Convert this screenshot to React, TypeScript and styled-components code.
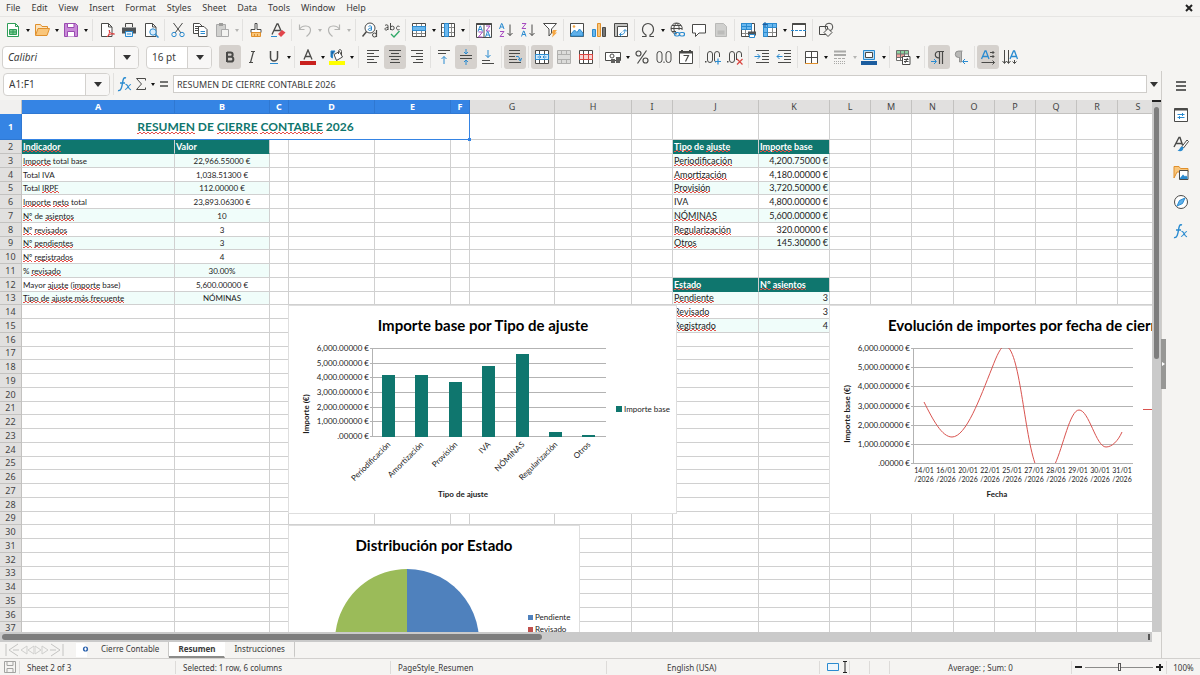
import React from "react";
import styled, { createGlobalStyle, css } from "styled-components";

const UI_FONT = `"Noto Sans", "Open Sans", sans-serif`;
const CELL_FONT = `Lato, "Noto Sans", sans-serif`;
const INK = "#4a4a48";
const BLUE = "#2a8bd0";
const GREEN = "#0f766e";

const GlobalStyle = createGlobalStyle`
  * { box-sizing: border-box; }
  body {
    margin: 0;
    background: #f5f4f2;
    color: #3a3a3a;
    font-family: ${UI_FONT};
    font-size: 10px;
  }
  button, input, select { font: inherit; color: inherit; margin: 0; }
  button { border: 0; padding: 0; background: none; }
`;

/* ---------- icons ---------- */

const s = (color = INK, width = 1) => ({ stroke: color, strokeWidth: width, fill: "none" });
const lines = (rows: [number, number, number][], color = INK) => (
  <path d={rows.map(([y, a, b]) => `M${a} ${y}.5H${b}`).join("")} {...s(color)} />
);
const frame = "M1.5 1.5h13v13h-13z";
const pilcrow = "M13 2.5H7.5a3.2 3.2 0 0 0 0 6.4H8.5V15M8.5 2.5V9M11.5 2.5V15";
const glyphA = (x: number, y: number) => (
  <path d={`M${x} ${y + 5.5}l2-5.5h.5l2 5.5M${x + 0.8} ${y + 3.5}h3`} {...s(BLUE)} />
);
const glyphZ = (x: number, y: number) => (
  <path d={`M${x} ${y + 0.5}h4l-4 5h4`} {...s("#a64bc0")} />
);

const icons: Record<string, React.ReactNode> = {
  newDoc: (
    <>
      <path d="M2.5 1.5h8l3 3v10h-11zM10.5 1.5v3h3" stroke="#2f9e58" fill="#fff" />
      <path d="M4.5 7.5h7v5h-7zM4.5 10h7M8 7.5v5" stroke="#2f9e58" fill="#7ccb93" />
    </>
  ),
  open: (
    <>
      <path d="M1.5 13V2.5h5l1.5 2h5.5V7" stroke="#e0902c" fill="#fbe3bd" />
      <path d="M1.5 13.5 4 6.5h11.5l-2.5 7z" stroke="#e0902c" fill="#f9c67b" />
    </>
  ),
  save: (
    <>
      <path d="M1.5 1.5h11l2 2v11h-13z" stroke="#9a4bb0" fill="#c98ad8" />
      <path d="M4.5 1.5h6.5v4h-6.5zM4.5 14.5v-5h7v5" stroke="#9a4bb0" fill="#fff" />
    </>
  ),
  pdf: (
    <>
      <path d="M2.5 1.5h7l3.5 3.5v9.5h-10.5zM9.5 1.5v3.5h3.5" stroke={INK} fill="#fff" />
      <path d="M8 15c2-2 3-5 2.5-7-1.5 1 2 5 5 4-2-1-5 0-7.5 3" {...s("#dc3b3b")} />
    </>
  ),
  print: (
    <>
      <path d="M4.5 5V1.5h7V5" {...s()} />
      <path d="M1 5.5h14v6H1z" fill="#4f5355" />
      <path d="M4.5 9.5h7v5h-7z" stroke={BLUE} fill="#e9f4fc" />
      <path d="M6 12h4" {...s(BLUE)} />
    </>
  ),
  preview: (
    <>
      <path d="M2.5 1.5h7l3.5 3.5v9.5h-10.5zM9.5 1.5v3.5h3.5" stroke={INK} fill="#fff" />
      <circle cx="10" cy="10" r="3.2" stroke={BLUE} fill="#d9edfb" />
      <path d="m12.5 12.5 3 3" {...s(BLUE, 1.5)} />
    </>
  ),
  cut: (
    <>
      <path d="M3.5 1 11 11M12.5 1 5 11" {...s()} />
      <circle cx="4" cy="12.5" r="2.2" {...s(BLUE)} />
      <circle cx="12" cy="12.5" r="2.2" {...s(BLUE)} />
    </>
  ),
  copy: (
    <>
      <path d="M1.5 1.5h6l2.5 2.5v7.5h-8.5zM3 4.5h4M3 6.5h4M3 8.5h4" stroke={INK} fill="#fff" />
      <path d="M6.5 4.5h5.5l3 3v7h-8.5z" stroke={INK} fill="#fff" />
      <path d="M8.5 9.5h4.5M8.5 11.5h4.5" {...s(BLUE)} />
    </>
  ),
  paste: (
    <>
      <path d="M2.5 2.5h9v12h-9z" stroke="#aaa" fill="#d0d0ce" />
      <path d="M5 1h4v3H5z" fill="#9d9d9b" />
      <path d="M7.5 7.5h7v7h-7z" stroke="#aaa" fill="#f3f3f1" />
    </>
  ),
  brush: (
    <>
      <path d="M7 1.5h2v6h4v3H3v-3h4z" stroke={INK} fill="#fff" />
      <path d="M3.5 10.5h9v4h-9zM6.5 12v2.5M9.5 12v2.5" stroke="#e0902c" fill="#f9c67b" />
    </>
  ),
  clear: (
    <>
      <path d="M2 12.5 7 2h1l4 9M4 8.5h6" {...s(INK, 1.3)} />
      <path d="M1 14.5h6" {...s(BLUE)} />
      <path d="m8 12 4-4 3.5 2.5-4.5 4.5z" fill="#e2454b" />
    </>
  ),
  undo: <path d="M2.5 2.5v5h5M2.5 7.5C5 2.5 13.5 3 13.5 8c0 3-2 5-4 6.5" {...s("#b4b4b2", 1.2)} />,
  redo: <path d="M13.5 2.5v5h-5M13.5 7.5C11 2.5 2.5 3 2.5 8c0 3 2 5 4 6.5" {...s("#b4b4b2", 1.2)} />,
  find: (
    <>
      <circle cx="8" cy="6" r="5" stroke={INK} fill="#fff" />
      <path d="M4.5 9.5.5 14.5" {...s(INK, 1.5)} />
      <path d="M6.5 4.5c1-1 3-1 3 .5v3.5M9.5 6c-4 0-4 2.5-1.5 2.5l1.5-1" {...s(BLUE)} />
      <path d="M14.5 8v7" {...s(INK, 1.2)} />
      <circle cx="12.5" cy="13" r="2" stroke={INK} fill="#f5f4f2" />
    </>
  ),
  spell: (
    <>
      <path d="M1 3.5c1-1 3-1 3 .5v4M4 5.5c-4 0-4 3-1 2.5l1-1M6.5 1v7" {...s()} />
      <circle cx="8.3" cy="6" r="1.9" {...s()} />
      <path d="M15.5 4.5c-4-2-4 5 0 3" {...s()} />
      <path d="m7 12 3 3 5.5-6" {...s("#2fa866", 1.3)} />
    </>
  ),
  row: (
    <>
      <path d={frame} stroke={INK} fill="#fff" />
      <path d="M5.5 2v12M10.5 2v12M2 11.5h12" {...s("#8a8a88")} />
      <path d="M1.5 4.5h13v4h-13z" stroke={BLUE} fill="#6bb8ee" />
    </>
  ),
  column: (
    <>
      <path d={frame} stroke={INK} fill="#fff" />
      <path d="M2 5.5h12M2 10.5h12M11.5 2v12" {...s("#8a8a88")} />
      <path d="M4.5 1.5h4v13h-4z" stroke={BLUE} fill="#6bb8ee" />
    </>
  ),
  sort: (
    <>
      <path d="M.5 1.5h15v14H.5zM8 1.5v14" stroke={INK} fill="#fff" />
      <path d="M.5 2h15" {...s(INK, 2)} />
      {glyphA(2, 4)}
      {glyphZ(2.5, 9.5)}
      {glyphZ(10, 3.5)}
      {glyphA(9.5, 9.5)}
    </>
  ),
  asc: (
    <>
      {glyphA(1.5, 1.5)}
      {glyphZ(2, 9)}
      <path d="M12 2.5v11M9.5 11l2.5 2.5 2.5-2.5" {...s()} />
    </>
  ),
  desc: (
    <>
      {glyphZ(2, 1)}
      {glyphA(1.5, 9)}
      <path d="M12 2.5v11M9.5 11l2.5 2.5 2.5-2.5" {...s()} />
    </>
  ),
  filter: (
    <>
      <path d="M1.5 1.5h13L9.5 7v4L7 14V7z" stroke={INK} fill="#fff" />
      <path d="M11 8h4l-2 2.5h2l-5 5 1-4H9.5z" fill="#f5a742" />
    </>
  ),
  image: (
    <>
      <path d={frame} stroke={INK} fill="#fff" />
      <path d="M2 12l3.5-4 2.5 2.5L10.5 7 14 11v3H2z" fill="#5fb0ea" stroke={BLUE} />
      <circle cx="5" cy="4.5" r="1.3" fill="#f5a742" />
    </>
  ),
  chart: (
    <>
      <path d="M1.5 7.5h3v7h-3z" stroke={BLUE} fill="#6bb8ee" />
      <path d="M6.5 1.5h3v13h-3z" stroke="#e0902c" fill="#f9c67b" />
      <path d="M11.5 5.5h3v9h-3z" stroke={INK} fill="#777" />
    </>
  ),
  pivot: (
    <>
      <path d={frame} stroke={INK} fill="#fff" />
      <path d="M2 2h12v2H2zM2 4h2v10H2z" fill="#c4c4c2" />
      <path d="M4.5 14.5v-10h10" {...s()} />
      <path d="M7 12.5c3 .5 5-1 5-4.5M10 9.5l2-2 2 2M8.5 10.5l-2 2 2 2" {...s(BLUE)} />
    </>
  ),
  omega: <path d="M2 14.5h4v-1.5C3.5 11.5 2.5 9.5 2.5 7.5c0-3.5 2.5-6 5.5-6s5.5 2.5 5.5 6c0 2-1 4-3.5 5.5v1.5h4" {...s(INK, 1.2)} />,
  link: (
    <>
      <path d="M7.5 1a5.5 5.5 0 1 0 0 11M7.5 1a5.5 5.5 0 0 1 5.5 7M2 6.5h11M3 3.5h9M3 9.5h4M7.5 1C4 4 4 9 7.5 12M7.5 1c2.5 2 3 5 2.5 7" {...s()} />
      <rect x="5.5" y="10.5" width="5" height="3.5" rx="1.7" {...s(BLUE, 1.2)} />
      <rect x="10.5" y="10.5" width="5" height="3.5" rx="1.7" {...s(BLUE, 1.2)} />
    </>
  ),
  comment: <path d="M1.5 2.5h13v8.5H8L4.5 14.5V11h-3z" stroke={INK} fill="#fff" />,
  headerFooter: (
    <>
      <path d="M2.5 1.5h8l3 3v10h-11z" stroke="#b9b9b7" fill="#d0d0ce" />
      <path d="M4.5 8.5h7v4h-7z" fill="#bcbcba" />
    </>
  ),
  printArea: (
    <>
      <path d={frame} stroke={INK} fill="#fff" />
      <path d="M2 11.5h12M11.5 2v12M5.5 8v6" {...s("#8a8a88")} />
      <path d="M1.5 1.5h10v6h-10zM1.5 4.5h10M6.5 1.5v6" stroke={BLUE} fill="#6bb8ee" />
      <path d="M8 9.5h8v4H8z" fill="#4f5355" />
      <path d="M9.5 12.5h5v3h-5z" stroke={BLUE} fill="#fff" />
    </>
  ),
  freeze: (
    <>
      <path d={frame} stroke={INK} fill="#fff" />
      <path d="M5 10.5h9M10.5 5v9" {...s("#8a8a88")} />
      <path d="M1.5 1.5h13v4h-9v9h-4zM10.5 1.5v4M1.5 10.5h4M5.5 5.5h-4M5.5 5.5v-4" stroke={BLUE} fill="#6bb8ee" />
      <path d="M3 0v5M.5 2.5h5" {...s("#1c5d9f")} />
    </>
  ),
  split: (
    <>
      <path d={frame} stroke={INK} fill="#fff" />
      <path d="M1.5 2h13" {...s(INK, 2)} />
      <path d="M0 8.5h16" stroke={BLUE} strokeDasharray="3 1" />
    </>
  ),
  shapes: (
    <>
      <path d="M1.5 4.5h8v8h-8z" {...s()} />
      <circle cx="11" cy="5" r="3.8" {...s()} />
      <path d="m10 6.5 4 4-4 4-4-4z" stroke={INK} fill="#f5f4f2" />
    </>
  ),
  bold: <path d="M5 3v10M5 3.5h3.5a2 2 0 0 1 0 4.3H5M5 7.8h4a2.3 2.3 0 0 1 0 4.7H5" {...s(INK, 2)} />,
  italic: <path d="M7 2.5h4M5 13.5h4M9.5 2.5l-3 11" {...s(INK, 1.2)} />,
  underline: (
    <>
      <path d="M4.5 2v6.5a3.5 3.5 0 0 0 7 0V2" {...s(INK, 1.5)} />
      <path d="M4 14.5h8" {...s(BLUE)} />
    </>
  ),
  fontColor: (
    <>
      <path d="m4 10.5 4-9.5 4 9.5M5.5 7.5h5" {...s(INK, 1.3)} />
      <path d="M0 12h16v4H0z" fill="#c9211e" />
    </>
  ),
  fillColor: (
    <>
      <path d="M0 12h16v4H0z" fill="#ffff00" />
      <path d="m5 5.5 5.5-3 3 5.5-6 3.5z" stroke={INK} fill="#fff" />
      <path d="M9.5 5V2.5c0-2.5 3-2.5 3 0V6" {...s()} />
      <path d="M2 2h4L3.5 5.5V9L2 8z" fill="#1c5d9f" stroke={BLUE} />
    </>
  ),
  alignLeft: lines([[1, 2, 14], [4, 2, 9], [7, 2, 14], [10, 2, 9], [13, 2, 12]]),
  alignCenter: lines([[1, 2, 14], [4, 4, 12], [7, 2, 14], [10, 4, 12], [13, 3, 13]]),
  alignRight: lines([[1, 2, 14], [4, 7, 14], [7, 2, 14], [10, 7, 14], [13, 4, 14]]),
  alignTop: (
    <>
      {lines([[1, 2, 14], [4, 2, 10]])}
      <path d="M8 15V7.5M5.5 10 8 7.5l2.5 2.5" {...s(BLUE)} />
    </>
  ),
  alignMiddle: (
    <>
      {lines([[6, 2, 14], [9, 2, 14]])}
      <path d="M8 0v5M6 3l2 2 2-2M8 16v-5M6 13l2-2 2 2" {...s(BLUE)} />
    </>
  ),
  alignBottom: (
    <>
      {lines([[11, 2, 10], [14, 2, 14]])}
      <path d="M8 1v7.5M5.5 6 8 8.5l2.5-2.5" {...s(BLUE)} />
    </>
  ),
  wrap: (
    <>
      {lines([[1, 2, 13], [4, 2, 13], [7, 2, 8], [10, 2, 10], [13, 2, 14]])}
      <path d="M9 7.5h2.5l2 4M11 10l2.5 2 1-3" {...s(BLUE)} />
    </>
  ),
  merge: (
    <>
      <path d={`${frame}M5.5 1.5v13M10.5 1.5v13`} stroke={INK} fill="#fff" />
      <path d="M1.5 5.5h13v5h-13z" stroke={BLUE} fill="#d6ecfb" />
      <path d="M3.5 8h3.5M9 8h3.5M5.5 6.5 7 8 5.5 9.5M10.5 6.5 9 8l1.5 1.5" {...s(BLUE)} />
    </>
  ),
  unmergeOff: <path d={`${frame}M1.5 5.5h13M1.5 10.5h13M5.5 1.5v4M10.5 1.5v4M5.5 10.5v4M10.5 10.5v4`} stroke="#b0b0ae" fill="#dcdcda" />,
  splitCells: (
    <>
      <path d={`${frame}M5.5 1.5v4M10.5 1.5v4M5.5 10.5v4M10.5 10.5v4`} stroke={INK} fill="#fff" />
      <path d="M1.5 5.5h13v5h-13zM5.5 5.5v5M10.5 5.5v5" stroke="#d9443f" fill="#f9d4d2" />
    </>
  ),
  currency: (
    <>
      <path d="M.5 3.5h15v8H.5z" stroke={INK} fill="#fff" />
      <circle cx="7" cy="7" r="2" {...s()} />
      <path d="M6 10h4v4H6zM11 8h4v6h-4z" fill="#60605e" />
    </>
  ),
  percent: (
    <>
      <circle cx="4.5" cy="4.5" r="2.5" {...s(INK, 1.2)} />
      <circle cx="11.5" cy="11.5" r="2.5" {...s(INK, 1.2)} />
      <path d="M12.5 1.5 3.5 14.5" {...s(INK, 1.2)} />
    </>
  ),
  number: (
    <>
      <rect x="1" y="2.5" width="5" height="11" rx="2.5" {...s()} />
      <rect x="10" y="2.5" width="5" height="11" rx="2.5" {...s()} />
      <path d="M7.5 12.5h1v1.5h-1z" fill={INK} />
    </>
  ),
  date: (
    <>
      <path d="M1.5 2.5h13v12h-13z" stroke={INK} fill="#fff" />
      <path d="M1 3.5h14M4 1v3M12 1v3" {...s(INK, 2)} />
      <path d="M5.5 6.5h5l-3 6" {...s(INK, 1.2)} />
    </>
  ),
  addDecimal: (
    <>
      <path d="M0 12h1.5v1.5H0z" fill={INK} />
      <rect x="2.5" y="2.5" width="5" height="11" rx="2.5" {...s()} />
      <path d="M14.5 8V5a2.5 2.5 0 0 0-5 0v6a2.5 2.5 0 0 0 1.5 2.3" {...s()} />
      <path d="M13 9.5v6M10 12.5h6" {...s(BLUE, 1.2)} />
    </>
  ),
  removeDecimal: (
    <>
      <path d="M0 12h1.5v1.5H0z" fill={INK} />
      <rect x="2.5" y="2.5" width="5" height="11" rx="2.5" {...s()} />
      <path d="M14.5 8V5a2.5 2.5 0 0 0-5 0v6" {...s()} />
      <path d="m10 10 5.5 5.5M15.5 10 10 15.5" {...s("#d9443f", 1.2)} />
    </>
  ),
  indent: (
    <>
      {lines([[1, 2, 15], [4, 8, 15], [7, 8, 15], [10, 8, 15], [13, 2, 15]])}
      <path d="M.5 7.5H6M3.5 5 6 7.5 3.5 10" {...s(BLUE)} />
    </>
  ),
  outdent: (
    <>
      {lines([[1, 2, 15], [4, 8, 15], [7, 8, 15], [10, 8, 15], [13, 2, 15]])}
      <path d="M6.5 7.5H1M3.5 5 1 7.5 3.5 10" {...s(BLUE)} />
    </>
  ),
  borders: (
    <>
      <path d="M2.5 14V2.5h12V14M8.5 2.5V14M2.5 8.5h12" stroke={INK} fill="#fff" />
      <path d="M2 14.5h13" {...s("#e0902c")} />
    </>
  ),
  borderStyle: (
    <>
      <path d="M2 2.5h12M2 6h12" {...s("#a9a9a7", 2)} />
      <path d="M2 9.5h12" stroke="#a9a9a7" strokeDasharray="3 1" />
      <path d="M2 12.5h12M2 14.5h12" stroke="#a9a9a7" strokeDasharray="1 1" />
    </>
  ),
  borderColor: (
    <>
      <path d="M2.5 1.5h11v9h-11z" stroke={BLUE} fill="#b8ddf6" />
      <path d="M4.5 3.5h7v5h-7z" stroke={INK} fill="#fff" />
      <path d="M0 12h16v4H0z" fill="#1c5d9f" />
    </>
  ),
  conditional: (
    <>
      <path d="M1.5 1.5h12v10h-12z" fill="#fff" />
      <path d="M2 2h12v3H2z" fill="#8cd3a2" />
      <path d="M2 5h8v4H2z" fill="#f2a5a1" />
      <path d="M1.5 1.5h12v10h-12zM5.5 1.5v10M9.5 1.5v10M1.5 5h12M1.5 8.5h12" {...s("#6f6f6d")} />
      <path d="M7.5 7.5h7.5v8H7.5z" stroke={INK} fill="#fff" />
      <path d="M9 10.5h4.5M9 12.5h4.5M12.5 9l-2.5 5" {...s()} />
    </>
  ),
  ltr: (
    <>
      <path d={pilcrow} {...s(INK, 1.2)} />
      <path d="M0 12.5h5M3 10l2.5 2.5L3 15" {...s(BLUE)} />
    </>
  ),
  rtl: (
    <>
      <path d="M9.5 2H5.5a3 3 0 0 0 0 6.5H6.5V13h2V2.5" fill="#b8b8b6" stroke="#777" strokeWidth=".7" />
      <path d="M15 12.5h-5M12 10l-2.5 2.5L12 15" {...s(BLUE)} />
    </>
  ),
  horizontalText: (
    <>
      <path d="m1.5 10 3.5-8h1l3 8M3 7.5h5" {...s(BLUE, 1.3)} />
      <path d="M10 3.5h4M10 7.5h4M1.5 13.5h13M12.5 2l1.5 1.5L12.5 5M12.5 6l1.5 1.5L12.5 9M12.5 11.5l2 2-2 2" {...s()} />
    </>
  ),
  verticalText: (
    <>
      <path d="m8 10 3.5-8h1l3 8M9.5 7.5h5" {...s(BLUE, 1.3)} />
      <path d="M2.5 1v13M6.5 1v13M12.5 11v3.5M.5 12l2 2.5 2-2.5M4.5 12l2 2.5 2-2.5M10.5 12.5l2 2 2-2" {...s()} />
    </>
  ),
  equals: <path d="M4 6h8M4 10h8" {...s(INK, 1.5)} />,
  sigma: <path d="M12.5 4.5V2.5H3.5L8.5 8l-5 5.5h9v-2" {...s()} />,
  fx: (
    <>
      <path d="M9 2C6.5 1 6 3.5 5.5 7S4 15.5 1 14.5M3 7h5" {...s(BLUE, 1.4)} />
      <path d="M8.5 8.5c2.5-1 3 6 5.5 5M14 8.5c-2-.5-4 5.5-6 5" {...s(BLUE, 1.2)} />
    </>
  ),
  menu: <path d="M3 4h10M3 8h10M3 12h10" {...s("#333", 1.6)} />,
  properties: (
    <>
      <path d={frame} stroke={INK} fill="#fff" />
      <path d="M1.5 2.5h13" {...s(INK, 2)} />
      <path d="M4.5 7.5h7M4.5 10.5h7M9.5 6v3M6.5 9v3" {...s(BLUE)} />
    </>
  ),
  styles: (
    <>
      <path d="m1 11 5-9.5h1L9.5 9M3 7.5h6" {...s(INK, 1.4)} />
      <path d="m9 10.5 5-6.5 1.5 1.5-5 6.5z" stroke={INK} fill="#fff" />
      <path d="M9.5 10.5c-3 0-2 3-5 4 3 1.5 6 .5 6-3z" fill={BLUE} />
    </>
  ),
  gallery: (
    <>
      <path d="M1 13V1.5h5l1.5 2H15V7H4z" stroke="#e0902c" fill="#f9c67b" />
      <path d="M6.5 5.5h8.5v9H6.5z" stroke={INK} fill="#fff" />
      <path d="m7 13 3-3.5 2 2 1-1 1.5 1.5v2H7z" fill={BLUE} />
    </>
  ),
  navigator: (
    <>
      <circle cx="8" cy="8" r="6.5" stroke={INK} fill="#fff" />
      <path d="m12 4-2.5 5.5L4 12l2.5-5.5z" fill="#5fb0ea" stroke={BLUE} />
    </>
  ),
  saved: <path d="M2.5 2.5h11v11h-11zM5 2.5v4h6v-4M5 13.5v-4h6v4" {...s("#a3a3a1")} />,
  addSheet: (
    <>
      <path d="M0 1h8l3 3v11H0z" fill="#fff" />
      <circle cx="9.5" cy="7" r="2.6" fill="#2d63ad" />
      <path d="M8 7h3M9.5 5.5v3" {...s("#fff")} />
    </>
  ),
  selectionMode: <path d="M.5 4.5h11v7H.5z" stroke={BLUE} fill="#eef6fc" />,
  cursor: <path d="M0 2.5h4M0 13.5h4M2 3v10" {...s("#222")} />,
  first: <path d="M2 2v12M14 2 5 8l9 6M9 8h6" {...s("#c4c4c2")} />,
  prev: <path d="M8 4 2 8l6 4zM15 4 9 8l6 4z" {...s("#cfcfcd")} />,
  next: <path d="m8 4 6 4-6 4zM1 4l6 4-6 4z" {...s("#cfcfcd")} />,
  last: <path d="M14 2v12M2 2l9 6-9 6M1 8h6" {...s("#c4c4c2")} />,
  close: <path d="m5 5 6 6M11 5l-6 6" {...s("#222", 2)} />,
};

const Svg = styled.svg`
  display: block;
  flex: none;
`;
const Icon = ({ name }: { name: string }) => (
  <Svg width="16" height="16" viewBox="0 0 16 16" aria-hidden="true">{icons[name]}</Svg>
);

/* ---------- chrome parts ---------- */

const Window = styled.div`
  display: flex;
  flex-direction: column;
  height: 100vh;
  overflow: hidden;
`;

const MenuBar = styled.nav`
  display: flex;
  align-items: center;
  gap: 11px;
  height: 17px;
  padding: 0 3px 0 6px;
  border-bottom: 1px solid #e6e5e3;
  font-size: 9px;
`;
const MenuItem = styled.button`
  line-height: 16px;
`;
const CloseButton = styled.button`
  margin-left: auto;
`;

const Toolbar = styled.div<{ $tall?: boolean }>`
  display: flex;
  align-items: center;
  height: ${(p) => (p.$tall ? 28 : 26)}px;
  padding-left: 2px;
`;
const ToolButton = styled.button<{ $active?: boolean }>`
  display: flex;
  align-items: center;
  justify-content: center;
  flex: none;
  width: 22px;
  height: 24px;
  border-radius: 3px;
  background: ${(p) => (p.$active ? "#d5d1cd" : "none")};
`;
const CaretButton = styled.button<{ $dim?: boolean }>`
  display: flex;
  align-items: center;
  justify-content: center;
  flex: none;
  width: 7px;
  height: 24px;
  &::after {
    content: "";
    border: 2px solid transparent;
    border-top: 3px solid ${(p) => (p.$dim ? "#b5b5b3" : "#111")};
    border-bottom: 0;
  }
`;
const Separator = styled.span<{ $wide?: boolean }>`
  flex: none;
  width: ${(p) => (p.$wide ? 7 : 5)}px;
  height: 22px;
  background: linear-gradient(#e2e1df, #e2e1df) center / 1px 100% no-repeat;
`;

const arrow = css`
  &::after {
    content: "";
    border: 4px solid transparent;
    border-top: 5px solid #333;
    border-bottom: 0;
  }
`;
const Combo = styled.div<{ $width: number; $gap?: boolean }>`
  display: grid;
  grid-template-columns: 1fr 24px;
  flex: none;
  width: ${(p) => p.$width}px;
  height: 23px;
  margin-right: ${(p) => (p.$gap ? 7 : 0)}px;
  border: 1px solid #d3d1ce;
  border-radius: 4px;
  background: #fff;
  overflow: hidden;
`;
const ComboSelect = styled.select<{ $italic?: boolean }>`
  grid-area: 1 / 1 / 2 / 3;
  appearance: none;
  border: 0;
  padding: 0 5px;
  background: none;
  font-style: ${(p) => (p.$italic ? "italic" : "normal")};
  outline: none;
`;
const ComboInput = styled.input`
  min-width: 0;
  border: 0;
  padding: 0 5px;
  background: none;
  outline: none;
`;
const ComboArrow = styled.span`
  grid-area: 1 / 2 / 2 / 3;
  display: flex;
  align-items: center;
  justify-content: center;
  border-left: 1px solid #d3d1ce;
  background: #f8f7f6;
  pointer-events: none;
  ${arrow}
`;
const ComboButton = styled.button`
  display: flex;
  align-items: center;
  justify-content: center;
  border-left: 1px solid #d3d1ce;
  background: #f8f7f6;
  ${arrow}
`;

const Body = styled.div`
  display: flex;
  flex: 1;
  min-height: 0;
`;
const Editor = styled.main`
  display: flex;
  flex-direction: column;
  flex: 1;
  min-width: 0;
`;
const FormulaBar = styled.div`
  display: flex;
  align-items: center;
  flex: none;
  height: 29px;
  padding: 0 0 3px 3px;
`;
const SmallTool = styled.button`
  display: flex;
  justify-content: center;
  flex: none;
  width: 16px;
`;
const FormulaInput = styled.input`
  flex: 1;
  min-width: 0;
  height: 18px;
  margin-left: 1px;
  padding: 0 3px;
  border: 1px solid #cfcdca;
  background: #fff;
  font-size: 9px;
  outline: none;
`;
const ExpandButton = styled.button`
  display: flex;
  align-items: center;
  justify-content: center;
  width: 14px;
  height: 18px;
  ${arrow}
`;
const Sidebar = styled.aside`
  position: relative;
  display: flex;
  flex-direction: column;
  align-items: center;
  flex: none;
  gap: 5px;
  width: 39px;
  padding-top: 3px;
  border-left: 1px solid #cfcdca;
`;
const SidebarHandle = styled.button`
  position: absolute;
  left: -1px;
  top: 268px;
  width: 5px;
  height: 50px;
  background: #979795;
  &::after {
    content: "";
    display: block;
    border: 2px solid transparent;
    border-left: 3px solid #fff;
    border-right: 0;
    width: 0;
    margin-left: 1px;
  }
`;

/* ---------- sheet ---------- */

const SheetArea = styled.div`
  display: grid;
  grid-template: 1fr 10px / 1fr 9px;
  flex: 1;
  min-height: 0;
`;
const Viewport = styled.div`
  position: relative;
  overflow: hidden;
  background: #fff;
`;
const VScroll = styled.div`
  padding: 5px 2px 0;
  border-top: 2px solid #222;
  background: #cacaca;
`;
const VThumb = styled.div`
  height: 48%;
  border-radius: 3px;
  background: #7d7d7d;
`;
const HScroll = styled.div`
  display: flex;
  justify-content: space-between;
  padding: 2px;
  background: #cacaca;
`;
const HThumb = styled.div`
  width: 47%;
  border-radius: 3px;
  background: #7d7d7d;
`;
const HSplit = styled.div`
  width: 2px;
  background: #555;
`;

const Table = styled.table`
  table-layout: fixed;
  width: 1px;
  border-collapse: separate;
  border-spacing: 0;
`;
const headFill = css<{ $selected?: boolean }>`
  background: ${(p) => (p.$selected ? "#3584e4" : "#e1e0df")};
  color: ${(p) => (p.$selected ? "#fff" : "#444")};
  font-weight: ${(p) => (p.$selected ? 700 : 400)};
  border-right: 1px solid ${(p) => (p.$selected ? "#2f78d2" : "#c3c2c0")};
  border-bottom: 1px solid ${(p) => (p.$selected ? "#2f78d2" : "#c3c2c0")};
`;
const ColHead = styled.th`
  height: 14px;
  padding: 0;
  font-size: 9px;
  line-height: 12px;
  ${headFill}
`;
const RowHead = styled.th`
  padding: 0;
  font-size: 9px;
  line-height: 12px;
  ${headFill}
`;
const Corner = styled.td`
  padding: 0;
  background: #f1f0ef;
  border-right: 1px solid #c3c2c0;
`;
const Row = styled.tr<{ $height: number }>`
  height: ${(p) => p.$height}px;
`;
type CellKind = { $kind?: "head" | "band" | "plain"; $align?: string; $large?: boolean };
const Cell = styled.td<CellKind>`
  padding: 0 1px;
  overflow: hidden;
  white-space: nowrap;
  font-family: ${CELL_FONT};
  font-size: ${(p) => (p.$large ? 9 : 8)}px;
  line-height: 12px;
  color: #1c1c1c;
  text-align: ${(p) => p.$align ?? "left"};
  border-right: 1px solid #d0d0d0;
  border-bottom: 1px solid #d0d0d0;
  ${(p) => p.$kind === "band" && css`background: #f0fdfa;`}
  ${(p) =>
    p.$kind === "head" &&
    css`
      background: ${GREEN};
      color: #fff;
      font-weight: 700;
      font-size: 9px;
      border-bottom-color: ${GREEN};
    `}
`;
const TitleCell = styled.td`
  position: relative;
  padding: 0;
  font-family: ${CELL_FONT};
  font-size: 12px;
  font-weight: 700;
  line-height: 22px;
  color: ${GREEN};
  text-align: center;
  white-space: nowrap;
  border-right: 1px solid #3584e4;
  border-bottom: 1px solid #3584e4;
`;
const FillHandle = styled.span`
  position: absolute;
  right: -2px;
  bottom: -2px;
  width: 3px;
  height: 3px;
  background: #3584e4;
`;
/* The squiggle is two rows of 2px dashes, the upper one shifted by half a period. */
const Misspelt = styled.span`
  background:
    linear-gradient(90deg, #e4504a 2px, transparent 2px) 0 100% / 4px 1px repeat-x,
    linear-gradient(90deg, #e4504a 2px, transparent 2px) 2px calc(100% - 1px) / 4px 1px repeat-x;
`;

const columns: [string, number][] = [
  ["A", 153], ["B", 95], ["C", 19], ["D", 86], ["E", 76], ["F", 19], ["G", 85], ["H", 77], ["I", 41],
  ["J", 86], ["K", 71], ["L", 41], ["M", 41], ["N", 42], ["O", 41], ["P", 41], ["Q", 41], ["R", 41],
  ["S", 41], ["T", 41], ["U", 41], ["V", 41], ["W", 41], ["X", 41], ["Y", 41], ["Z", 41],
];

/* Words wrapped in ~ are flagged by the spell checker. */
const summary = [
  ["~Importe~ total base", "22,966.55000 €"],
  ["Total IVA", "1,038.51300 €"],
  ["Total ~IRPF~", "112.00000 €"],
  ["~Importe~ ~neto~ total", "23,893.06300 €"],
  ["~Nº~ de ~asientos~", "10"],
  ["~Nº~ ~revisados~", "3"],
  ["~Nº~ ~pendientes~", "3"],
  ["~Nº~ ~registrados~", "4"],
  ["% ~revisado~", "30.00%"],
  ["Mayor ~ajuste~ (~importe~ base)", "5,600.00000 €"],
  ["~Tipo de~ ~ajuste más frecuente~", "NÓMINAS"],
];
const byType = [
  ["~Periodificación~", "4,200.75000 €"],
  ["~Amortización~", "4,180.00000 €"],
  ["~Provisión~", "3,720.50000 €"],
  ["IVA", "4,800.00000 €"],
  ["~NÓMINAS~", "5,600.00000 €"],
  ["~Regularización~", "320.00000 €"],
  ["~Otros~", "145.30000 €"],
];
const byState = [["~Pendiente~", "3"], ["~Revisado~", "3"], ["~Registrado~", "4"]];

type CellData = { text: string; kind: "head" | "band" | "plain"; align?: string; large?: boolean };
const cells: Record<string, CellData> = {
  A2: { text: "~Indicador~", kind: "head" },
  B2: { text: "Valor", kind: "head" },
  J2: { text: "~Tipo~ de ~ajuste~", kind: "head" },
  K2: { text: "~Importe~ base", kind: "head" },
  J12: { text: "~Estado~", kind: "head" },
  K12: { text: "~Nº~ ~asientos~", kind: "head" },
};
const addTable = (rows: string[][], start: number, a: string, b: string, align: string, large: boolean) =>
  rows.forEach(([label, value], i) => {
    const kind = i % 2 === 0 ? "band" : "plain";
    cells[`${a}${start + i}`] = { text: label, kind, large };
    cells[`${b}${start + i}`] = { text: value, kind, align, large };
  });
addTable(summary, 3, "A", "B", "center", false);
addTable(byType, 3, "J", "K", "right", true);
addTable(byState, 13, "J", "K", "right", true);

const Spelled = ({ text }: { text: string }) => (
  <>{text.split("~").map((part, i) => (i % 2 ? <Misspelt key={i}>{part}</Misspelt> : part))}</>
);

const ROW_COUNT = 70;
const rowHeight = (n: number) => (n === 1 ? 26 : n % 4 === 1 ? 13 : 14);

const Grid = () => (
  <Table>
    <colgroup>
      <col style={{ width: 22 }} />
      {columns.map(([name, width]) => <col key={name} style={{ width }} />)}
    </colgroup>
    <thead>
      <tr>
        <Corner />
        {columns.map(([name], i) => <ColHead key={name} scope="col" $selected={i < 6}>{name}</ColHead>)}
      </tr>
    </thead>
    <tbody>
      {Array.from({ length: ROW_COUNT }, (_, i) => i + 1).map((n) => (
        <Row key={n} $height={rowHeight(n)}>
          <RowHead scope="row" $selected={n === 1}>{n}</RowHead>
          {n === 1 && (
            <TitleCell colSpan={6}>
              <Spelled text="~RESUMEN~ DE ~CIERRE~ ~CONTABLE~ 2026" />
              <FillHandle />
            </TitleCell>
          )}
          {columns.slice(n === 1 ? 6 : 0).map(([name]) => {
            const cell = cells[`${name}${n}`];
            return (
              <Cell key={name} $kind={cell?.kind} $align={cell?.align} $large={cell?.large}>
                {cell && <Spelled text={cell.text} />}
              </Cell>
            );
          })}
        </Row>
      ))}
    </tbody>
  </Table>
);

/* ---------- charts ---------- */

const ChartFrame = styled.figure<{ $x: number; $y: number }>`
  position: absolute;
  left: ${(p) => p.$x}px;
  top: ${(p) => p.$y}px;
  margin: 0;
  background: #fff;
  border: 1px solid #dedede;
`;
const ChartSvg = styled.svg`
  display: block;
  font-family: ${CELL_FONT};
  font-size: 8px;
  fill: #1c1c1c;
`;
const ChartTitle = styled.text`
  font-size: 15px;
  font-weight: 700;
  fill: #000;
  text-anchor: middle;
`;
const AxisTitle = styled.text`
  font-weight: 700;
  text-anchor: middle;
`;
const DateLabel = styled.text`
  font-size: 7px;
  text-anchor: middle;
`;

const scale = ["6,000.00000 €", "5,000.00000 €", "4,000.00000 €", "3,000.00000 €", "2,000.00000 €", "1,000.00000 €", ".00000 €"];
const Scale = ({ left, right, height }: { left: number; right: number; height: number }) => (
  <>
    {scale.map((label, i) => {
      const y = 42 + Math.round((i * height) / 6);
      return (
        <g key={label}>
          <path d={`M${left - 2} ${y}.5H${right}`} stroke="#b3b3b3" fill="none" />
          <text x={left - 3} y={y + 3} textAnchor="end">{label}</text>
        </g>
      );
    })}
    <path d={`M${left}.5 42V${42 + height}`} stroke="#b3b3b3" fill="none" />
  </>
);

const bars: [string, number][] = [
  ["Periodificación", 4200.75], ["Amortización", 4180], ["Provisión", 3720.5], ["IVA", 4800],
  ["NÓMINAS", 5600], ["Regularización", 320], ["Otros", 145.3],
];
const BarChart = () => (
  <ChartFrame $x={288} $y={205}>
    <ChartSvg width="387" height="207" viewBox="0 0 387 207">
      <ChartTitle x="194" y="25">Importe base por Tipo de ajuste</ChartTitle>
      <Scale left={83} right={317} height={88} />
      {bars.map(([name, value], i) => {
        const x = 100 + Math.round(i * 33.4);
        const h = Math.round((value / 6000) * 89);
        return (
          <g key={name}>
            <rect x={x - 7} y={131 - h} width="13" height={h} fill={GREEN} />
            <text transform={`translate(${x + 2} 139) rotate(-45)`} textAnchor="end">{name}</text>
          </g>
        );
      })}
      <AxisTitle transform="translate(20 108) rotate(-90)">Importe (€)</AxisTitle>
      <AxisTitle x="174" y="191">Tipo de ajuste</AxisTitle>
      <rect x="327" y="100" width="6" height="6" fill={GREEN} />
      <text x="335" y="106">Importe base</text>
    </ChartSvg>
  </ChartFrame>
);

const dates = ["14/01", "16/01", "20/01", "22/01", "25/01", "27/01", "28/01", "29/01", "30/01", "31/01"];
const LineChart = () => (
  <ChartFrame $x={829} $y={205}>
    <ChartSvg width="387" height="207" viewBox="0 0 387 207">
      <defs>
        <clipPath id="plot"><rect x="83" y="42" width="221" height="115" /></clipPath>
      </defs>
      <ChartTitle x="196" y="25">Evolución de importes por fecha de cierre</ChartTitle>
      <Scale left={83} right={303} height={115} />
      <path
        d="M94 96C103 114 112 131 122 131C136 131 150 92 162 62C167 49 171 40 175 40C190 40 194 130 206 160C212 175 219 175 225 158C233 141 240 104 249 104C259 104 266 141 276 141C282 141 288 135 292 126"
        stroke="#d9534f" fill="none" clipPath="url(#plot)"
      />
      {dates.map((d, i) => (
        <DateLabel key={d} x={94 + i * 22} y="167">
          {d}
          <tspan x={94 + i * 22} dy="9">/2026</tspan>
        </DateLabel>
      ))}
      <AxisTitle transform="translate(20 108) rotate(-90)">Importe base (€)</AxisTitle>
      <AxisTitle x="167" y="191">Fecha</AxisTitle>
      <path d="M313 103.5h16" stroke="#d9534f" fill="none" />
      <text x="332" y="106">Importe base</text>
    </ChartSvg>
  </ChartFrame>
);

const PIE = { x: 118, y: 115, r: 72 };
const slice = (from: number, to: number) => {
  const at = (t: number) => {
    const a = t * 2 * Math.PI;
    return `${PIE.x + PIE.r * Math.sin(a)} ${PIE.y - PIE.r * Math.cos(a)}`;
  };
  return `M${PIE.x} ${PIE.y}L${at(from)}A${PIE.r} ${PIE.r} 0 0 1 ${at(to)}Z`;
};
const states: [string, number, number, string][] = [
  ["Pendiente", 0, 0.3, "#4f81bd"],
  ["Revisado", 0.3, 0.6, "#c0504d"],
  ["Registrado", 0.6, 1, "#9bbb59"],
];
const PieChart = () => (
  <ChartFrame $x={288} $y={425}>
    <ChartSvg width="290" height="207" viewBox="0 0 290 207">
      <ChartTitle x="145" y="25">Distribución por Estado</ChartTitle>
      {states.map(([name, from, to, color], i) => (
        <g key={name}>
          <path d={slice(from, to)} fill={color} />
          <rect x="239" y={89 + i * 12} width="5" height="5" fill={color} />
          <text x="246" y={94 + i * 12}>{name}</text>
        </g>
      ))}
    </ChartSvg>
  </ChartFrame>
);

/* ---------- bottom bars ---------- */

const TabBar = styled.div`
  display: flex;
  align-items: center;
  flex: none;
  height: 16px;
  padding-left: 4px;
  font-size: 8px;
`;
const TabNav = styled.button`
  width: 15px;
  overflow: hidden;
`;
const AddSheet = styled.button`
  margin-left: 12px;
`;
const Tab = styled.button<{ $current?: boolean }>`
  height: 16px;
  padding: 0 9px;
  line-height: 14px;
  border-right: 1px solid #c9c8c6;
  border-bottom: 2px solid transparent;
  ${(p) =>
    p.$current &&
    css`
      background: #fff;
      font-weight: 700;
      border-right-color: transparent;
      border-bottom-color: #8b8b89;
    `}
`;

const StatusBar = styled.footer`
  display: grid;
  grid-template-columns: 20px 156fr 215fr 216fr 213fr 30px 20px 20px 182fr 95px 33px;
  align-items: center;
  flex: none;
  height: 17px;
  border-top: 1px solid #d2d0ce;
  font-size: 8px;
`;
const Status = styled.div<{ $center?: boolean; $indent?: number }>`
  display: flex;
  align-items: center;
  justify-content: ${(p) => (p.$center ? "center" : "flex-start")};
  height: 13px;
  padding-left: ${(p) => (p.$center ? 0 : p.$indent ?? 7)}px;
  white-space: nowrap;
  border-right: 1px solid #dddbd9;
`;
const ZoomLabel = styled.button`
  white-space: nowrap;
`;
const ZoomStep = styled.button<{ $plus?: boolean }>`
  flex: none;
  width: 13px;
  height: 13px;
  background:
    linear-gradient(#222, #222) center / 7px 2px no-repeat
    ${(p) => p.$plus && css`, linear-gradient(#222, #222) center / 2px 7px no-repeat`};
`;
const ZoomRange = styled.input`
  appearance: none;
  flex: 1;
  min-width: 0;
  height: 9px;
  background: linear-gradient(#8c8c8a, #8c8c8a) center / 100% 1px no-repeat;
  &::-webkit-slider-thumb {
    appearance: none;
    width: 3px;
    height: 8px;
    border: 1px solid #555;
    background: #f5f4f2;
  }
`;

/* ---------- toolbars ---------- */

/* "|" thin gap, "||" wide gap, "v" caret, "v-" dim caret, leading "*" pressed button */
const standardTools = "newDoc v open v save v || pdf print preview | cut copy paste v- | brush clear | undo v- redo v- || find spell | row v column v || sort asc desc filter | image chart pivot | omega v link comment headerFooter | printArea freeze v split | shapes";
const formatTools = "*bold italic underline v | fontColor v fillColor v || alignLeft *alignCenter alignRight | alignTop *alignMiddle alignBottom | *wrap | *merge unmergeOff splitCells | currency v percent number date | addDecimal removeDecimal | indent outdent | borders v borderStyle v- borderColor v | conditional v || *ltr rtl | *horizontalText verticalText";

const Tools = ({ list }: { list: string }) => (
  <>
    {list.split(" ").map((item, i) => {
      if (item === "|" || item === "||") return <Separator key={i} $wide={item === "||"} />;
      if (item === "v" || item === "v-") return <CaretButton key={i} aria-label="More options" $dim={item === "v-"} />;
      const active = item.startsWith("*");
      const name = item.replace("*", "");
      return (
        <ToolButton key={i} aria-label={name} aria-pressed={active} $active={active}>
          <Icon name={name} />
        </ToolButton>
      );
    })}
  </>
);

const menus = ["File", "Edit", "View", "Insert", "Format", "Styles", "Sheet", "Data", "Tools", "Window", "Help"];

export default function App() {
  return (
    <Window>
      <GlobalStyle />
      <MenuBar>
        {menus.map((m) => <MenuItem key={m}>{m}</MenuItem>)}
        <CloseButton aria-label="Close document"><Icon name="close" /></CloseButton>
      </MenuBar>
      <Toolbar><Tools list={standardTools} /></Toolbar>
      <Toolbar $tall>
        <Combo $width={137} $gap>
          <ComboSelect aria-label="Font name" $italic><option>Calibri</option></ComboSelect>
          <ComboArrow />
        </Combo>
        <Combo $width={66} $gap>
          <ComboSelect aria-label="Font size"><option>16 pt</option></ComboSelect>
          <ComboArrow />
        </Combo>
        <Tools list={formatTools} />
      </Toolbar>
      <Body>
        <Editor>
          <FormulaBar>
            <Combo $width={107}>
              <ComboInput aria-label="Name box" defaultValue="A1:F1" />
              <ComboButton aria-label="Named ranges" />
            </Combo>
            <Separator $wide />
            <SmallTool aria-label="Function wizard"><Icon name="fx" /></SmallTool>
            <SmallTool aria-label="Sum"><Icon name="sigma" /></SmallTool>
            <CaretButton aria-label="More functions" />
            <SmallTool aria-label="Formula"><Icon name="equals" /></SmallTool>
            <FormulaInput aria-label="Input line" defaultValue="RESUMEN DE CIERRE CONTABLE 2026" />
            <ExpandButton aria-label="Expand formula bar" />
          </FormulaBar>
          <SheetArea>
            <Viewport>
              <Grid />
              <BarChart />
              <LineChart />
              <PieChart />
            </Viewport>
            <VScroll><VThumb /></VScroll>
            <HScroll><HThumb /><HSplit /></HScroll>
          </SheetArea>
          <TabBar>
            <TabNav aria-label="First sheet"><Icon name="first" /></TabNav>
            <TabNav aria-label="Previous sheet"><Icon name="prev" /></TabNav>
            <TabNav aria-label="Next sheet"><Icon name="next" /></TabNav>
            <TabNav aria-label="Last sheet"><Icon name="last" /></TabNav>
            <AddSheet aria-label="Add sheet"><Icon name="addSheet" /></AddSheet>
            <Tab>Cierre Contable</Tab>
            <Tab $current>Resumen</Tab>
            <Tab>Instrucciones</Tab>
          </TabBar>
        </Editor>
        <Sidebar>
          {["menu", "properties", "styles", "gallery", "navigator", "fx"].map((n) => (
            <ToolButton key={n} aria-label={n}><Icon name={n} /></ToolButton>
          ))}
          <SidebarHandle aria-label="Hide sidebar" />
        </Sidebar>
      </Body>
      <StatusBar>
        <Status $center><Icon name="saved" /></Status>
        <Status>Sheet 2 of 3</Status>
        <Status>Selected: 1 row, 6 columns</Status>
        <Status>PageStyle_Resumen</Status>
        <Status $indent={60}>English (USA)</Status>
        <Status><Icon name="selectionMode" /><Icon name="cursor" /></Status>
        <Status />
        <Status />
        <Status $center>Average: ; Sum: 0</Status>
        <Status $center>
          <ZoomStep aria-label="Zoom out" />
          <ZoomRange type="range" aria-label="Zoom" defaultValue={50} />
          <ZoomStep aria-label="Zoom in" $plus />
        </Status>
        <ZoomLabel>100%</ZoomLabel>
      </StatusBar>
    </Window>
  );
}
